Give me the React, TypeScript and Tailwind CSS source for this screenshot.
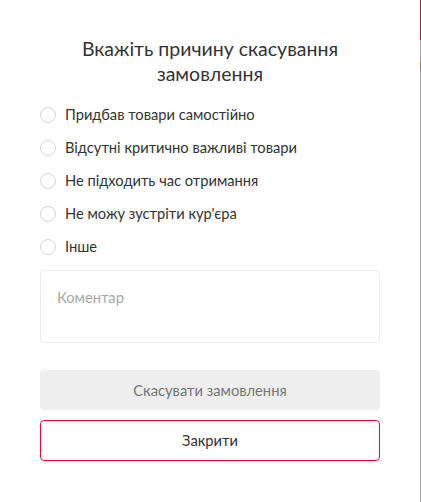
import React, { useState } from "react";

const reasons = [
  "Придбав товари самостійно",
  "Відсутні критично важливі товари",
  "Не підходить час отримання",
  "Не можу зустріти кур'єра",
  "Інше",
];

export default function App() {
  const [picked, setPicked] = useState<number | null>(null);
  const [note, setNote] = useState("");

  return (
    <div
      className="flex w-[421px] h-[502px] bg-white"
      style={{ fontFamily: "Lato, 'Noto Sans', sans-serif" }}
    >
      <div className="w-[420px] h-full bg-white px-10 pt-[36px]">
        <h2 className="text-center text-[19.5px] leading-[25px] font-normal text-[#333333] px-4">
          Вкажіть причину скасування замовлення
        </h2>

        <div className="mt-[12px] flex flex-col">
          {reasons.map((r, i) => (
            <label
              key={r}
              className="flex items-center gap-[9px] h-[33px] cursor-pointer"
              onClick={() => setPicked(i)}
            >
              <span
                className={
                  picked === i
                    ? "w-4 h-4 shrink-0 rounded-full border-[5px] border-[#e30e2e]"
                    : "w-4 h-4 shrink-0 rounded-full border border-[#d6d6d6]"
                }
              ></span>
              <span className="text-[14.7px] text-[#333333]">{r}</span>
            </label>
          ))}
        </div>

        <textarea
          value={note}
          onChange={(e) => setNote(e.target.value)}
          placeholder="Коментар"
          className="mt-[7px] block w-full h-[73px] resize-none rounded border border-[#ececec] px-4 py-[15px] text-[14.7px] text-[#333333] placeholder:text-[#a8a8a8] outline-none"
        />

        <button className="mt-[27px] w-full h-10 rounded bg-[#eeeeee] text-[14.7px] text-[#777777]">
          Скасувати замовлення
        </button>
        <button className="mt-[10px] w-full h-[41px] rounded border border-[#e30e2e] bg-white text-[14.7px] text-[#333333]">
          Закрити
        </button>
      </div>
      <div className="w-px h-full flex flex-col bg-[#a3a3a3]">
        <div className="h-[40px] bg-[#a5283a]"></div>
        <div className="h-[22px] bg-[#a9a9a9]"></div>
        <div className="h-[8px] bg-[#8a7c60]"></div>
      </div>
    </div>
  );
}
